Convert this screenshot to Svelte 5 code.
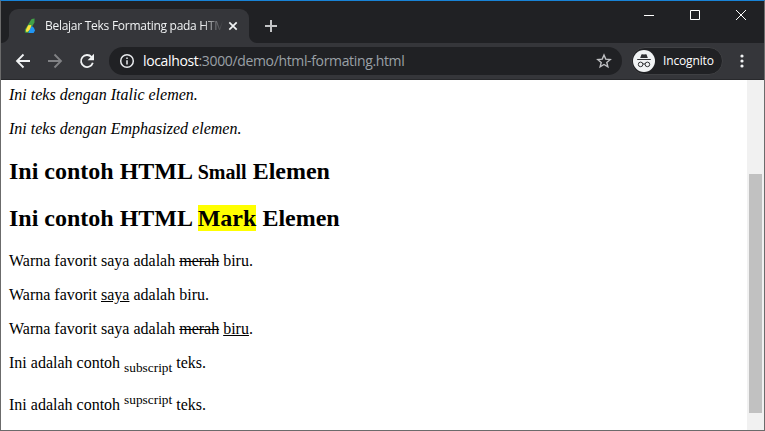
<script>
  const title = 'Belajar Teks Formating pada HTM';
</script>

<div class="window">
  <header class="tabs">
    <div class="tab">
      <svg class="favicon" width="12" height="16" viewBox="0 0 12 16">
        <path d="M7.6 1 10.6.4 10.4 4.6 4.4 15 .8 14.4 1 11.5 3.5 7.5Z" fill="#43a047" />
        <path d="M4.2 7.2 7.3 7 6.4 11.5 2.8 14.3Q1.4 13.4 2.2 11.3Z" fill="#ffe33b" />
        <path d="M7.8 8Q10.4 9.2 11 12.6L9.6 15H4.4L5.6 11.7Z" fill="#2196f3" />
      </svg>
      <span class="title">{title}</span>
      <svg class="close" width="10" height="10" viewBox="0 0 10 10"><path d="m1.3 1.3 7.4 7.4m0-7.4L1.3 8.7" /></svg>
    </div>
    <svg class="plus" width="12" height="12" viewBox="0 0 12 12"><path d="M6 0v12M0 6h12" /></svg>
    <div class="controls">
      <svg width="10" height="10" viewBox="0 0 10 10"><path d="M0 5.5h10" /></svg>
      <svg width="10" height="10" viewBox="0 0 10 10"><path d="M.5.5h9v9h-9z" /></svg>
      <svg width="10" height="10" viewBox="0 0 10 10"><path d="m0 0 10 10M10 0 0 10" /></svg>
    </div>
  </header>

  <nav class="toolbar">
    <svg class="back" width="16" height="16" viewBox="0 0 16 16"><path d="M15 8H2m6.5-6.5L2 8l6.5 6.5" /></svg>
    <svg class="forward" width="16" height="16" viewBox="0 0 16 16"><path d="M1 8h13M7.5 1.5 14 8l-6.5 6.5" /></svg>
    <svg class="reload" width="16" height="16" viewBox="0 0 16 16"><path d="M12.6 4.1A6 6 0 1 0 13.8 9.7" /><path class="solid" d="M15 .8v6.4H8.6Z" /></svg>
    <div class="address">
      <svg class="info" width="16" height="16" viewBox="0 0 16 16"><circle cx="8" cy="8" r="6.3" /><path d="M8 7.2v4.2M8 4.4V6" /></svg>
      <span class="url"><b>localhost</b>:3000/demo/html-formating.html</span>
      <svg class="star" width="16" height="16" viewBox="0 0 16 16"><path d="m8 2 1.75 4.1 4.45.4-3.4 2.9 1.05 4.4L8 11.45 4.15 13.8 5.2 9.4 1.8 6.5l4.45-.4Z" /></svg>
    </div>
    <div class="incognito">
      <svg width="22" height="22" viewBox="0 0 22 22">
        <circle cx="11" cy="11" r="11" fill="#f1f3f4" />
        <path d="M7.2 8 8.4 4.6Q8.7 4 9.4 4.2L11 4.6l1.6-.4q.7-.2 1 .4L14.8 8ZM4.2 9h13.6v1.1H4.2Z" fill="#303134" />
        <g fill="none" stroke="#303134"><circle cx="7.6" cy="14.4" r="2.3" /><circle cx="14.4" cy="14.4" r="2.3" /><path d="M9.9 14.2q1.1-.8 2.2 0" /></g>
      </svg>
      <span>Incognito</span>
    </div>
    <svg class="more" width="4" height="14" viewBox="0 0 4 14"><circle cx="2" cy="2" r="1.6" /><circle cx="2" cy="7" r="1.6" /><circle cx="2" cy="12" r="1.6" /></svg>
  </nav>

  <div class="viewport">
    <main>
      <p><i>Ini teks dengan Italic elemen.</i></p>
      <p><em>Ini teks dengan Emphasized elemen.</em></p>
      <h2>Ini contoh HTML <small>Small</small> Elemen</h2>
      <h2>Ini contoh HTML <mark>Mark</mark> Elemen</h2>
      <p>Warna favorit saya adalah <del>merah</del> biru.</p>
      <p>Warna favorit <ins>saya</ins> adalah biru.</p>
      <p>Warna favorit saya adalah <del>merah</del> <ins>biru</ins>.</p>
      <p>Ini adalah contoh <sub>subscript</sub> teks.</p>
      <p>Ini adalah contoh <sup>supscript</sup> teks.</p>
    </main>
    <aside class="scrollbar">
      <svg width="7" height="4" viewBox="0 0 7 4" fill="#505050"><path d="M3 0h1v1h1v1h1v1h1v1H0V3h1V2h1V1h1z" /></svg>
      <div class="track"><div class="thumb"></div></div>
      <svg width="7" height="4" viewBox="0 0 7 4" fill="#a3a3a3"><path d="M0 0h7v1H6v1H5v1H4v1H3V3H2V2H1V1H0z" /></svg>
    </aside>
  </div>
</div>

<style>
  .window {
    box-sizing: border-box;
    width: 765px;
    height: 431px;
    display: flex;
    flex-direction: column;
    overflow: hidden;
    border: 1px solid #6b6b6b;
    border-top-color: #1883d7;
    background: #fff;
    font-family: "Open Sans", "Noto Sans", sans-serif;
  }
  svg { display: block; flex: none; fill: none; }
  .tabs {
    height: 42px;
    flex: none;
    display: flex;
    background: #202124;
  }
  .tab {
    position: relative;
    box-sizing: border-box;
    width: 240px;
    height: 34px;
    margin: 8px 0 0 8px;
    padding: 0 11px 0 15px;
    display: flex;
    align-items: center;
    border-radius: 9px 9px 0 0;
    background: #35363a;
  }
  .tab::before, .tab::after {
    content: "";
    position: absolute;
    bottom: 0;
    width: 8px;
    height: 8px;
  }
  .tab::before { left: -8px; background: radial-gradient(circle at 0 0, #202124 7.5px, #35363a 8.5px); }
  .tab::after { right: -8px; background: radial-gradient(circle at 100% 0, #202124 7.5px, #35363a 8.5px); }
  .title {
    width: 178px;
    margin-left: 9px;
    color: #f1f3f4;
    font-size: 12px;
    line-height: 20px;
    letter-spacing: -.27px;
    white-space: nowrap;
    mask-image: linear-gradient(90deg, #000 157px, transparent 178px);
  }
  .close { margin-left: 5px; stroke: #f1f3f4; stroke-width: 1.7; }
  .plus { margin: 19px 0 0 16px; stroke: #c3c4c6; stroke-width: 2; }
  .controls { display: flex; gap: 36px; margin: 9px 18px 0 auto; stroke: #fff; }
  .toolbar {
    box-sizing: border-box;
    height: 37px;
    flex: none;
    display: flex;
    align-items: center;
    background: #35363a;
    border-bottom: 1px solid #28292c;
  }
  .back, .forward, .reload { stroke: #f1f3f4; stroke-width: 1.8; }
  .back { margin-left: 14px; }
  .forward { margin-left: 16px; stroke: #818285; }
  .reload { margin-left: 16px; }
  .reload .solid { fill: #f1f3f4; stroke: none; }
  .address {
    box-sizing: border-box;
    width: 513px;
    height: 28px;
    margin-left: 14px;
    padding: 0 10px;
    display: flex;
    align-items: center;
    border-radius: 14px;
    background: #202124;
  }
  .info { stroke: #e8eaed; stroke-width: 1.5; }
  .url { margin-left: 8px; color: #9aa0a6; font-size: 14px; line-height: 20px; letter-spacing: -.35px; white-space: nowrap; }
  b { color: #fff; font-weight: 400; }
  .star { margin-left: auto; stroke: #c0c1c4; stroke-width: 1.4; }
  .incognito {
    box-sizing: border-box;
    width: 92px;
    height: 28px;
    margin-left: 9px;
    padding: 0 2px 0 1px;
    display: flex;
    align-items: center;
    border: 1px solid #3f4043;
    border-radius: 14px;
    background: #202124;
    color: #fff;
    font-size: 12px;
  }
  .incognito span { margin-left: 8px; line-height: 20px; letter-spacing: -.15px; white-space: nowrap; }
  .more { margin-left: 17px; fill: #f1f3f4; }
  .viewport { flex: 1; min-height: 0; display: flex; overflow: hidden; }
  main {
    flex: 1;
    padding: 6px 0 0 8px;
    color: #000;
    font-family: "Liberation Serif", "Times New Roman", serif;
    font-size: 16px;
    white-space: nowrap;
  }
  p { margin: 0 0 16px; }
  h2 { margin: 20px 0; font-size: 24px; }
  mark { background: #ff0; color: #000; }
  .scrollbar {
    width: 17px;
    flex: none;
    display: flex;
    flex-direction: column;
    align-items: center;
    background: #f1f1f1;
  }
  .scrollbar > svg:first-child { margin-top: 7px; }
  .track { width: 13px; flex: 1; padding-top: 83px; }
  .thumb { height: 239px; background: #c1c1c1; }
  .scrollbar > svg:last-child { margin-bottom: 7px; }
</style>
